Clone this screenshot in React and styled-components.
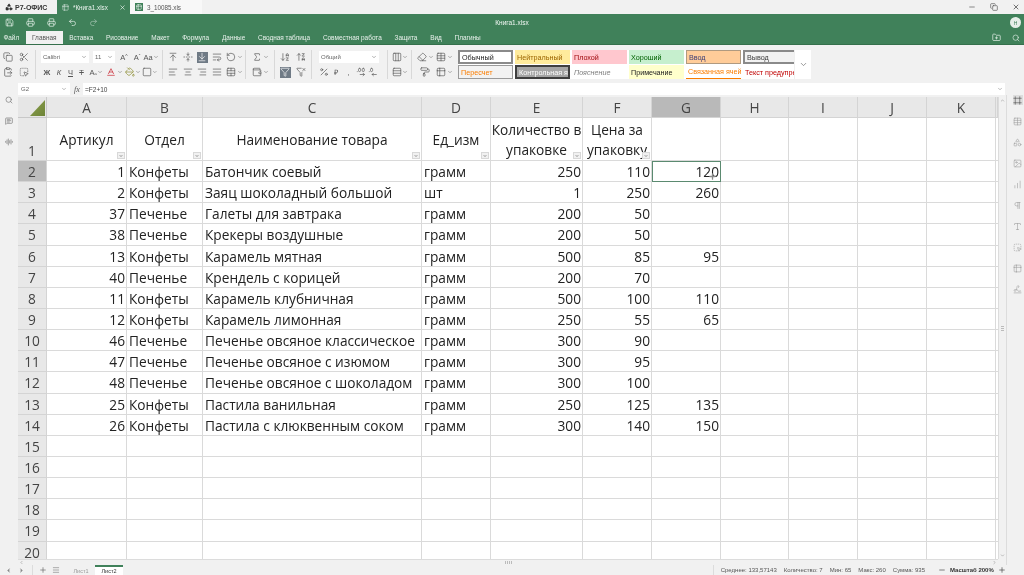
import React from "react";
import styled, { createGlobalStyle } from "styled-components";
import {
  Save, Printer, Undo2, Redo2, Copy, Scissors, ClipboardPaste, SquareDashedMousePointer,
  ChevronDown, ChevronLeft, ChevronRight, ArrowUpToLine, FoldVertical, ArrowDownToLine, WrapText, RotateCcw,
  AlignLeft, AlignCenter, AlignRight, AlignJustify, TableCellsMerge, Sigma, ArrowDownAZ, ArrowUpZA, Funnel, FunnelX,
  Percent, Columns3, Rows3, Shapes, Eraser, PaintRoller, Table, Table2, Search, MessageSquareText, AudioLines,
  Minus, Plus, X, Copy as Restore, FolderPlus, Image, ChartNoAxesColumnIncreasing, Pilcrow, Type, Frame, Signature,
  Menu, Square, Wallet, DecimalsArrowRight, DecimalsArrowLeft, Baseline, PaintBucket,
} from "lucide-react";

const GlobalStyle = createGlobalStyle`
  html, body {
    margin: 0;
    padding: 0;
    overflow: hidden;
    background: #f1f1f1;
  }
  body {
    font-family: "Liberation Sans", Arial, sans-serif;
  }
`;

const menuItems = ["Вставка", "Рисование", "Макет", "Формула", "Данные", "Сводная таблица", "Совместная работа", "Защита", "Вид", "Плагины"];

const stylesTop = [
  { name: "Обычный", bg: "#fff", color: "#222", border: "2px solid #8a8a8a" },
  { name: "Нейтральный", bg: "#ffeb9c", color: "#9c6500" },
  { name: "Плохой", bg: "#ffc7ce", color: "#9c0006" },
  { name: "Хороший", bg: "#c6efce", color: "#006100" },
  { name: "Ввод", bg: "#ffcc99", color: "#3f3f76", border: "1px solid #b09a80" },
  { name: "Вывод", bg: "#f2f2f2", color: "#3f3f3f", border: "2px solid #8a8a8a" },
];

const stylesBottom = [
  { name: "Пересчет", bg: "#f2f2f2", color: "#fa7d00", border: "1px solid #9a9a9a" },
  { name: "Контрольная я", bg: "#a5a5a5", color: "#fff", border: "2px solid #3f3f3f" },
  { name: "Пояснение", bg: "#fff", color: "#7f7f7f", italic: true },
  { name: "Примечание", bg: "#ffffcc", color: "#222" },
  { name: "Связанная ячей", bg: "#fff", color: "#fa7d00", underline: true },
  { name: "Текст предупре", bg: "#fff", color: "#c00000" },
];

const columns = ["A", "B", "C", "D", "E", "F", "G", "H", "I", "J", "K"];

const headerCells = ["Артикул", "Отдел", "Наименование товара", "Ед_изм", "Количество в упаковке", "Цена за упаковку"];

const rows = [
  [1, "Конфеты", "Батончик соевый", "грамм", 250, 110, 120],
  [2, "Конфеты", "Заяц шоколадный большой", "шт", 1, 250, 260],
  [37, "Печенье", "Галеты для завтрака", "грамм", 200, 50, ""],
  [38, "Печенье", "Крекеры воздушные", "грамм", 200, 50, ""],
  [13, "Конфеты", "Карамель мятная", "грамм", 500, 85, 95],
  [40, "Печенье", "Крендель с корицей", "грамм", 200, 70, ""],
  [11, "Конфеты", "Карамель клубничная", "грамм", 500, 100, 110],
  [12, "Конфеты", "Карамель лимонная", "грамм", 250, 55, 65],
  [46, "Печенье", "Печенье овсяное классическое", "грамм", 300, 90, ""],
  [47, "Печенье", "Печенье овсяное с изюмом", "грамм", 300, 95, ""],
  [48, "Печенье", "Печенье овсяное с шоколадом", "грамм", 300, 100, ""],
  [25, "Конфеты", "Пастила ванильная", "грамм", 250, 125, 135],
  [26, "Конфеты", "Пастила с клюквенным соком", "грамм", 300, 140, 150],
];

const emptyRows = [15, 16, 17, 18, 19, 20];

const railIcons = [Frame, Table, Shapes, Image, ChartNoAxesColumnIncreasing, Pilcrow, Type, SquareDashedMousePointer, Table2, Signature];

function Tool({ icon: Icon, w = 14, caret, active, color }) {
  return (
    <Slot $w={w}>
      <ToolFace $active={active}>
        <Icon size={10} color={active ? "#fff" : color || "#555"} strokeWidth={1.6} />
      </ToolFace>
      {caret && <ChevronDown size={6} color="#666" />}
    </Slot>
  );
}

function TextTool({ children, w = 12, caret, $style }) {
  return (
    <Slot $w={w}>
      <GlyphText $style={$style}>{children}</GlyphText>
      {caret && <ChevronDown size={6} color="#666" />}
    </Slot>
  );
}

export default function App() {
  return (
    <Page>
      <GlobalStyle />
      <TitleBar>
        <Brand>
          <Shapes size={8} color="#333" fill="#333" />
          <span>Р7-ОФИС</span>
        </Brand>
        <DocTab $active>
          <Table2 size={7} color="#d6e6dc" />
          <DocName>*Книга1.xlsx</DocName>
          <X size={7} color="#fff" />
        </DocTab>
        <DocTab>
          <FileBadge><Table2 size={6} color="#fff" /></FileBadge>
          <DocName>3_10085.xls</DocName>
        </DocTab>
        <WindowButtons>
          <Minus size={8} color="#555" />
          <Restore size={8} color="#555" />
          <X size={8} color="#333" />
        </WindowButtons>
      </TitleBar>

      <GreenHeader>
        <QuickRow>
          <QuickTools>
            <Save size={9} color="#dcebe2" />
            <Printer size={9} color="#dcebe2" />
            <Printer size={9} color="#dcebe2" />
            <Undo2 size={9} color="#dcebe2" />
            <Redo2 size={9} color="#9fc0ac" />
          </QuickTools>
          <DocTitle>Книга1.xlsx</DocTitle>
          <Avatar>Н</Avatar>
        </QuickRow>
        <MenuRow>
          <MenuItem $first>Файл</MenuItem>
          <MenuItem $active>Главная</MenuItem>
          {menuItems.map((item) => (
            <MenuItem key={item}>{item}</MenuItem>
          ))}
          <MenuTools>
            <FolderPlus size={9} color="#dcebe2" />
            <Search size={8} color="#dcebe2" />
          </MenuTools>
        </MenuRow>
      </GreenHeader>

      <Ribbon>
        <Group $w={36}>
          <ToolRow>
            <Tool icon={Copy} w={16} />
            <Tool icon={Scissors} w={16} />
          </ToolRow>
          <ToolRow>
            <Tool icon={ClipboardPaste} w={16} />
            <Tool icon={SquareDashedMousePointer} w={16} />
          </ToolRow>
        </Group>
        <Group $w={127} $pad={5}>
          <ToolRow>
            <Select $w={48} $mr={4}>Calibri<ChevronDown size={6} color="#666" /></Select>
            <Select $w={22} $mr={2}>11<ChevronDown size={6} color="#666" /></Select>
            <TextTool w={14}>A<Sup>^</Sup></TextTool>
            <TextTool w={12}>A<Sup>ˇ</Sup></TextTool>
            <TextTool w={16} caret>Aa</TextTool>
          </ToolRow>
          <ToolRow>
            <TextTool w={12} $style="bold">Ж</TextTool>
            <TextTool w={12} $style="italic">К</TextTool>
            <TextTool w={11} $style="underline">Ч</TextTool>
            <TextTool w={11} $style="strike">Т</TextTool>
            <TextTool w={18} caret>A<Sub>a</Sub></TextTool>
            <Tool icon={Baseline} w={18} color="#c8202c" caret />
            <Tool icon={PaintBucket} w={19} color="#8a8a2a" caret />
            <Tool icon={Square} w={16} caret />
          </ToolRow>
        </Group>
        <Group $w={83} $pad={3}>
          <ToolRow>
            <Tool icon={ArrowUpToLine} w={14.5} />
            <Tool icon={FoldVertical} w={14.5} />
            <Tool icon={ArrowDownToLine} w={14.5} active />
            <Tool icon={WrapText} w={14.5} />
            <Tool icon={RotateCcw} w={20} caret />
          </ToolRow>
          <ToolRow>
            <Tool icon={AlignLeft} w={14.5} />
            <Tool icon={AlignCenter} w={14.5} />
            <Tool icon={AlignRight} w={14.5} />
            <Tool icon={AlignJustify} w={14.5} />
            <Tool icon={TableCellsMerge} w={20} caret />
          </ToolRow>
        </Group>
        <Group $w={29} $pad={4}>
          <ToolRow><Tool icon={Sigma} w={20} caret /></ToolRow>
          <ToolRow><Tool icon={Wallet} w={20} caret /></ToolRow>
        </Group>
        <Group $w={37} $pad={2}>
          <ToolRow>
            <Tool icon={ArrowDownAZ} w={16} />
            <Tool icon={ArrowUpZA} w={16} />
          </ToolRow>
          <ToolRow>
            <Tool icon={Funnel} w={16} active />
            <Tool icon={FunnelX} w={16} />
          </ToolRow>
        </Group>
        <Group $w={76} $pad={7}>
          <ToolRow>
            <Select $w={60} $mr={0}>Общий<ChevronDown size={6} color="#666" /></Select>
          </ToolRow>
          <ToolRow>
            <Tool icon={Percent} w={10} />
            <TextTool w={13}>₽</TextTool>
            <TextTool w={13}>,</TextTool>
            <Tool icon={DecimalsArrowRight} w={12} />
            <Tool icon={DecimalsArrowLeft} w={12} />
          </ToolRow>
        </Group>
        <Group $w={24} $pad={2}>
          <ToolRow><Tool icon={Columns3} w={19} caret /></ToolRow>
          <ToolRow><Tool icon={Rows3} w={19} caret /></ToolRow>
        </Group>
        <Group $w={46} $pad={3} $plain>
          <ToolRow>
            <Tool icon={Eraser} w={20} caret />
            <Tool icon={Table} w={18} caret />
          </ToolRow>
          <ToolRow>
            <Tool icon={PaintRoller} w={20} />
            <Tool icon={Table2} w={18} caret />
          </ToolRow>
        </Group>
        <Gallery>
          <GalleryGrid>
            {[...stylesTop, ...stylesBottom].map((s) => (
              <StyleCell key={s.name} $bg={s.bg} $color={s.color} $border={s.border} $italic={s.italic} $underline={s.underline}>
                {s.name}
              </StyleCell>
            ))}
          </GalleryGrid>
          <GalleryMore><ChevronDown size={9} color="#777" /></GalleryMore>
        </Gallery>
      </Ribbon>

      <FormulaBar>
        <NameBox>G2<ChevronDown size={6} color="#777" /></NameBox>
        <FxMark>fx</FxMark>
        <FormulaInput>=F2+10<ChevronDown size={6} color="#777" /></FormulaInput>
      </FormulaBar>

      <Main>
        <LeftRail>
          <Search size={8} color="#777" />
          <MessageSquareText size={8} color="#777" />
          <AudioLines size={8} color="#777" />
        </LeftRail>

        <SheetArea>
          <SheetRow>
            <Sheet>
              <CornerCell><CornerMark /></CornerCell>
              {columns.map((c) => (
                <ColHead key={c} $selected={c === "G"}>{c}</ColHead>
              ))}
              <ColHead />

              <RowHead $bottom>1</RowHead>
              {headerCells.map((text) => (
                <HeadCell key={text}>
                  <span>{text}</span>
                  <FilterButton><ChevronDown size={4} color="#333" strokeWidth={3} /></FilterButton>
                </HeadCell>
              ))}
              {columns.slice(6).map((c) => <Cell key={c} />)}
              <Cell />

              {rows.map((row, i) => (
                <React.Fragment key={row[0]}>
                  <RowHead $selected={i === 0}>{i + 2}</RowHead>
                  {row.map((value, j) => (
                    <Cell key={j} $right={typeof value === "number"} $active={i === 0 && j === 6}>
                      {value}
                      {i === 0 && j === 6 && <CellCursor><Plus size={9} color="#8a8a8a" strokeWidth={3.5} /></CellCursor>}
                    </Cell>
                  ))}
                  {columns.slice(7).map((c) => <Cell key={c} />)}
                  <Cell />
                </React.Fragment>
              ))}

              {emptyRows.map((n) => (
                <React.Fragment key={n}>
                  <RowHead>{n}</RowHead>
                  {columns.map((c) => <Cell key={c} />)}
                  <Cell />
                </React.Fragment>
              ))}
            </Sheet>
            <VScroll>
              <ScrollArrow><ChevronDown size={5} color="#777" transform="rotate(180)" /></ScrollArrow>
              <VThumbGrip />
              <ScrollArrow><ChevronDown size={5} color="#777" /></ScrollArrow>
            </VScroll>
          </SheetRow>
          <HScroll>
            <ScrollArrow><ChevronLeft size={5} color="#777" /></ScrollArrow>
            <HThumbGrip />
            <ScrollArrow><ChevronRight size={5} color="#777" /></ScrollArrow>
          </HScroll>
        </SheetArea>

        <RightRail>
          {railIcons.map((Icon, i) => (
            <RailIcon key={i} $active={i === 0}>
              <Icon size={9} color={i === 0 ? "#444" : "#9a9a9a"} strokeWidth={1.5} />
            </RailIcon>
          ))}
        </RightRail>
      </Main>

      <StatusBar>
        <SheetNav>
          <ChevronLeft size={7} color="#888" fill="#888" />
          <ChevronRight size={7} color="#888" fill="#888" />
        </SheetNav>
        <SheetActions>
          <Plus size={8} color="#666" />
          <Menu size={8} color="#888" />
        </SheetActions>
        <SheetTab>Лист1</SheetTab>
        <SheetTab $active>Лист2</SheetTab>
        <StatusInfo>
          <span>Среднее: 133,57143</span>
          <span>Количество: 7</span>
          <span>Мин: 65</span>
          <span>Макс: 260</span>
          <span>Сумма: 935</span>
        </StatusInfo>
        <Zoom>
          <Minus size={8} color="#444" />
          <strong>Масштаб 200%</strong>
          <Plus size={8} color="#444" />
        </Zoom>
      </StatusBar>
    </Page>
  );
}

const Page = styled.div`
  width: 1024px;
  height: 575px;
  display: flex;
  flex-direction: column;
  overflow: hidden;
  background: #f1f1f1;
  filter: blur(0.3px);
`;

const TitleBar = styled.div`
  height: 14px;
  flex: none;
  display: flex;
  align-items: stretch;
  background: #f1f1f1;
`;

const Brand = styled.div`
  width: 57px;
  display: flex;
  align-items: center;
  gap: 2px;
  padding-left: 5px;
  box-sizing: border-box;
  font-size: 7px;
  font-weight: 700;
  color: #333;
`;

const DocTab = styled.div`
  width: ${({ $active }) => ($active ? "73px" : "72px")};
  display: flex;
  align-items: center;
  gap: 4px;
  padding: 0 4px 0 5px;
  box-sizing: border-box;
  background: ${({ $active }) => ($active ? "#40815a" : "#f8f8f8")};
  color: ${({ $active }) => ($active ? "#e8f1ec" : "#555")};
`;

const DocName = styled.span`
  flex: 1;
  font-size: 6.3px;
`;

const FileBadge = styled.span`
  width: 8px;
  height: 8px;
  display: flex;
  align-items: center;
  justify-content: center;
  background: #40815a;
`;

const WindowButtons = styled.div`
  margin-left: auto;
  display: flex;
  align-items: center;
  gap: 14px;
  padding-right: 4px;
`;

const GreenHeader = styled.div`
  height: 31px;
  flex: none;
  display: flex;
  flex-direction: column;
  background: #40815a;
  border-bottom: 1px solid #35704c;
  box-sizing: border-box;
`;

const QuickRow = styled.div`
  height: 17px;
  position: relative;
  display: flex;
  align-items: center;
  justify-content: center;
`;

const QuickTools = styled.div`
  position: absolute;
  left: 5px;
  display: flex;
  gap: 12px;
`;

const DocTitle = styled.div`
  font-size: 6.5px;
  color: #f0f6f2;
`;

const Avatar = styled.div`
  position: absolute;
  right: 3px;
  top: 3px;
  width: 11px;
  height: 11px;
  border-radius: 50%;
  background: #e6efe9;
  color: #40815a;
  font-size: 5px;
  display: flex;
  align-items: center;
  justify-content: center;
`;

const MenuRow = styled.div`
  flex: 1;
  display: flex;
  align-items: stretch;
`;

const MenuItem = styled.div`
  display: flex;
  align-items: center;
  padding: 0 6.4px;
  margin-left: ${({ $first }) => ($first ? "-3px" : "0")};
  font-size: 6.45px;
  background: ${({ $active }) => ($active ? "#f1f1f1" : "transparent")};
  color: ${({ $active }) => ($active ? "#555" : "#e8f1ec")};
`;

const MenuTools = styled.div`
  margin-left: auto;
  display: flex;
  align-items: center;
  gap: 11px;
  padding-right: 4px;
`;

const Ribbon = styled.div`
  height: 38px;
  flex: none;
  display: flex;
  align-items: flex-start;
  padding-top: 5px;
  box-sizing: border-box;
  background: #f1f1f1;
`;

const Group = styled.div`
  width: ${({ $w }) => $w}px;
  height: 29px;
  flex: none;
  display: flex;
  flex-direction: column;
  justify-content: space-between;
  padding-left: ${({ $pad }) => $pad || 0}px;
  box-sizing: border-box;
  border-right: ${({ $plain }) => ($plain ? "none" : "1px solid #d8d8d8")};
`;

const ToolRow = styled.div`
  height: 14px;
  display: flex;
  align-items: center;
`;

const Slot = styled.div`
  width: ${({ $w }) => $w}px;
  height: 14px;
  flex: none;
  display: flex;
  align-items: center;
  justify-content: center;
`;

const ToolFace = styled.span`
  width: 11px;
  height: 11px;
  display: flex;
  align-items: center;
  justify-content: center;
  background: ${({ $active }) => ($active ? "#6f7a85" : "transparent")};
`;

const GlyphText = styled.span`
  font-size: 7.5px;
  color: #555;
  font-weight: ${({ $style }) => ($style === "bold" ? 700 : 400)};
  font-style: ${({ $style }) => ($style === "italic" ? "italic" : "normal")};
  text-decoration: ${({ $style }) => ($style === "underline" ? "underline" : $style === "strike" ? "line-through" : "none")};
`;

const Sup = styled.span`
  font-size: 5px;
  vertical-align: 2px;
`;

const Sub = styled.span`
  font-size: 4px;
`;

const Select = styled.div`
  width: ${({ $w }) => $w}px;
  height: 12px;
  flex: none;
  margin-right: ${({ $mr }) => $mr}px;
  padding: 0 2px;
  box-sizing: border-box;
  display: flex;
  align-items: center;
  justify-content: space-between;
  background: #fff;
  font-size: 6px;
  color: #666;
`;

const Gallery = styled.div`
  width: 353px;
  height: 29px;
  flex: none;
  display: flex;
  background: #fff;
`;

const GalleryGrid = styled.div`
  flex: 1;
  display: grid;
  grid-template-columns: repeat(6, 55px);
  grid-template-rows: 14px 14px;
  column-gap: 2px;
  row-gap: 1px;
  align-content: center;
  overflow: hidden;
`;

const StyleCell = styled.div`
  display: flex;
  align-items: center;
  padding-left: 2px;
  box-sizing: border-box;
  overflow: hidden;
  white-space: nowrap;
  font-size: 7.2px;
  background: ${({ $bg }) => $bg};
  color: ${({ $color }) => $color};
  font-style: ${({ $italic }) => ($italic ? "italic" : "normal")};
  border: ${({ $border }) => $border || "none"};
  border-bottom: ${({ $border, $underline }) => ($underline ? "1px solid #fa7d00" : $border || "none")};
`;

const GalleryMore = styled.div`
  width: 16px;
  display: flex;
  align-items: center;
  justify-content: center;
  border-left: 1px solid #f0f0f0;
`;

const FormulaBar = styled.div`
  height: 12px;
  flex: none;
  display: flex;
  align-items: stretch;
  padding-left: 18px;
  padding-right: 19px;
  background: #f1f1f1;
`;

const NameBox = styled.div`
  width: 52px;
  display: flex;
  align-items: center;
  justify-content: space-between;
  padding: 0 3px;
  box-sizing: border-box;
  background: #fff;
  font-size: 6px;
  color: #666;
`;

const FxMark = styled.div`
  width: 10px;
  margin-left: 2px;
  font-family: "Liberation Serif", serif;
  font-style: italic;
  font-size: 8px;
  color: #555;
  display: flex;
  align-items: center;
  justify-content: center;
`;

const FormulaInput = styled.div`
  flex: 1;
  margin-left: 1px;
  display: flex;
  align-items: center;
  justify-content: space-between;
  padding: 0 2px;
  background: #fff;
  font-size: 6.5px;
  color: #444;
`;

const Main = styled.div`
  flex: 1;
  min-height: 0;
  display: flex;
  padding-top: 2px;
`;

const LeftRail = styled.div`
  width: 18px;
  flex: none;
  display: flex;
  flex-direction: column;
  align-items: center;
  gap: 13px;
  margin-top: -1px;
`;

const SheetArea = styled.div`
  width: 988px;
  flex: none;
  display: flex;
  flex-direction: column;
  min-height: 0;
`;

const SheetRow = styled.div`
  flex: 1;
  min-height: 0;
  display: flex;
`;

const Sheet = styled.div`
  width: 980px;
  flex: none;
  overflow: hidden;
  display: grid;
  background: #fff;
  grid-template-columns: 29px 80px 76px 219px 69px 92px 69px 69px 68px 69px 69px 69px 2px;
  grid-template-rows: 21px 43px repeat(19, 21.15px);
  font-family: "Open Sans", "Noto Sans", sans-serif;
  font-size: 13.7px;
  color: #222;
`;

const CornerCell = styled.div`
  position: relative;
  background: #e6e6e6;
  border-right: 1px solid #c8c8c8;
  border-bottom: 1px solid #c8c8c8;
`;

const CornerMark = styled.div`
  position: absolute;
  right: 1px;
  bottom: 1px;
  width: 15px;
  height: 16px;
  background: linear-gradient(135deg, #8da04e, #6d8437);
  clip-path: polygon(100% 0, 100% 100%, 0 100%);
`;

const ColHead = styled.div`
  display: flex;
  align-items: center;
  justify-content: center;
  box-sizing: border-box;
  background: ${({ $selected }) => ($selected ? "#b9b9b9" : "#e8e8e8")};
  border-right: 1px solid #d4d4d4;
  border-bottom: 1px solid #d4d4d4;
  color: #444;
`;

const RowHead = styled.div`
  display: flex;
  align-items: ${({ $bottom }) => ($bottom ? "flex-end" : "center")};
  justify-content: center;
  padding-top: 1px;
  box-sizing: border-box;
  overflow: hidden;
  background: ${({ $selected }) => ($selected ? "#bcbcbc" : "#e8e8e8")};
  border-right: 1px solid #d4d4d4;
  border-bottom: 1px solid #d4d4d4;
  color: #444;
`;

const Cell = styled.div`
  position: relative;
  box-sizing: border-box;
  display: flex;
  align-items: center;
  justify-content: ${({ $right }) => ($right ? "flex-end" : "flex-start")};
  padding: 1px 1px 0 2px;
  white-space: nowrap;
  overflow: ${({ $active }) => ($active ? "visible" : "hidden")};
  border-right: 1px solid #dadada;
  border-bottom: 1px solid #dadada;
  outline: ${({ $active }) => ($active ? "1.5px solid #5b8a70" : "none")};
  outline-offset: -1px;
`;

const HeadCell = styled.div`
  position: relative;
  box-sizing: border-box;
  display: flex;
  align-items: center;
  justify-content: center;
  text-align: center;
  line-height: 20px;
  padding-top: 2px;
  overflow: hidden;
  border-right: 1px solid #dadada;
  border-bottom: 1px solid #dadada;
`;

const FilterButton = styled.span`
  position: absolute;
  right: 1px;
  bottom: 1px;
  width: 8px;
  height: 7px;
  display: flex;
  align-items: center;
  justify-content: center;
  background: #f1f1f1;
  border: 1px solid #d8d8d8;
  box-sizing: border-box;
`;

const CellCursor = styled.span`
  position: absolute;
  right: 3px;
  bottom: 0;
  display: flex;
`;

const VScroll = styled.div`
  width: 8px;
  flex: none;
  display: flex;
  flex-direction: column;
  align-items: center;
  justify-content: space-between;
  background: #f1f1f1;
  border-left: 1px solid #dcdcdc;
  box-sizing: border-box;
`;

const ScrollArrow = styled.span`
  width: 7px;
  height: 7px;
  flex: none;
  display: flex;
  align-items: center;
  justify-content: center;
`;

const VThumbGrip = styled.span`
  width: 3px;
  height: 5px;
  background: repeating-linear-gradient(#bbb 0 1px, transparent 1px 2px);
`;

const HScroll = styled.div`
  height: 6px;
  flex: none;
  width: 980px;
  display: flex;
  align-items: center;
  justify-content: space-between;
  background: #f1f1f1;
  border-top: 1px solid #dcdcdc;
  box-sizing: border-box;
`;

const HThumbGrip = styled.span`
  width: 7px;
  height: 3px;
  background: repeating-linear-gradient(90deg, #bbb 0 1px, transparent 1px 2px);
`;

const RightRail = styled.div`
  width: 18px;
  flex: none;
  display: flex;
  flex-direction: column;
  align-items: center;
  gap: 11px;
  margin-top: -2px;
  padding-left: 4px;
  border-left: 1px solid #dcdcdc;
  box-sizing: border-box;
`;

const RailIcon = styled.span`
  width: 10px;
  height: 10px;
  flex: none;
  display: flex;
  align-items: center;
  justify-content: center;
  background: ${({ $active }) => ($active ? "#dddddd" : "transparent")};
`;

const StatusBar = styled.div`
  height: 10px;
  flex: none;
  display: flex;
  align-items: stretch;
  font-size: 6px;
  color: #666;
  background: #f1f1f1;
`;

const SheetNav = styled.div`
  width: 33px;
  display: flex;
  align-items: center;
  gap: 6px;
  padding-left: 5px;
  box-sizing: border-box;
  border-right: 1px solid #dcdcdc;
`;

const SheetActions = styled.div`
  width: 34px;
  display: flex;
  align-items: center;
  gap: 5px;
  padding-left: 6px;
  box-sizing: border-box;
`;

const SheetTab = styled.div`
  width: 28px;
  display: flex;
  align-items: center;
  justify-content: center;
  box-sizing: border-box;
  border-top: 2px solid ${({ $active }) => ($active ? "#40815a" : "transparent")};
  background: ${({ $active }) => ($active ? "#fff" : "transparent")};
  color: ${({ $active }) => ($active ? "#333" : "#999")};
  font-size: 5.5px;
`;

const StatusInfo = styled.div`
  margin-left: auto;
  display: flex;
  align-items: center;
  gap: 7px;
  padding-left: 7px;
  padding-right: 2px;
  border-left: 1px solid #dcdcdc;
  color: #555;
`;

const Zoom = styled.div`
  width: 97px;
  display: flex;
  align-items: center;
  gap: 4px;
  padding-left: 11px;
  box-sizing: border-box;
  color: #333;
  strong {
    font-weight: 600;
  }
`;
